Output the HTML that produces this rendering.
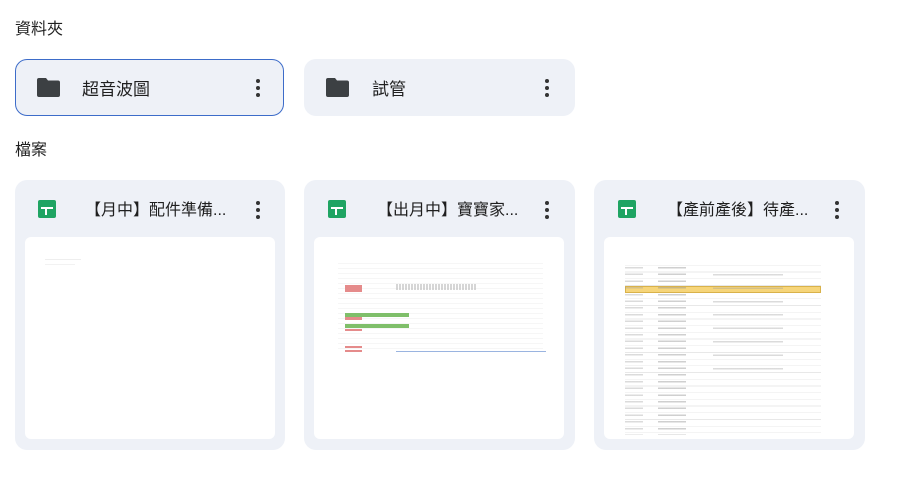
<!DOCTYPE html>
<html><head><meta charset="utf-8"><style>
*{margin:0;padding:0;box-sizing:border-box}
body{width:900px;height:477px;background:#fff;font-family:"Liberation Sans","Noto Sans CJK TC",sans-serif;color:#1f1f1f;position:relative;overflow:hidden}
.h{position:absolute;left:15px;font-size:16px}
.card{position:absolute;background:#eef1f7;border-radius:12px}
.fold{height:57px;top:59px}
.sel{border:1.5px solid #3d6cc9}
.t{position:absolute;font-size:16px;white-space:nowrap}
.fold .t{font-size:17px}
.dots{position:absolute;width:4px}
.dots i{display:block;width:4px;height:4px;border-radius:50%;background:#333;margin-bottom:3px}
.prev{position:absolute;left:10px;top:57px;width:250px;height:202px;background:#fff;border-radius:6px;overflow:hidden}
.sh{position:absolute;width:18px;height:18px;background:#1fa463;border-radius:2px}
.sh:before{content:"";position:absolute;left:3px;top:7px;width:12px;height:2px;background:#fff}
.sh:after{content:"";position:absolute;left:7px;top:7px;width:2px;height:8px;background:#fff}
.b{position:absolute}
</style></head><body>
<div class="h" style="top:15px">資料夾</div>
<div class="card fold sel" style="left:15px;width:269px">
 <svg style="position:absolute;left:21px;top:18px" width="23" height="19" viewBox="0 0 23 19"><path d="M2 0h7l2 2.5h10a2 2 0 0 1 2 2V17a2 2 0 0 1-2 2H2a2 2 0 0 1-2-2V2a2 2 0 0 1 2-2z" fill="#3c4043"/></svg>
 <div class="t" style="left:66px;top:15px">超音波圖</div>
 <div class="dots" style="left:240px;top:19px"><i></i><i></i><i></i></div>
</div>
<div class="card fold" style="left:304px;width:271px">
 <svg style="position:absolute;left:22px;top:19px" width="23" height="19" viewBox="0 0 23 19"><path d="M2 0h7l2 2.5h10a2 2 0 0 1 2 2V17a2 2 0 0 1-2 2H2a2 2 0 0 1-2-2V2a2 2 0 0 1 2-2z" fill="#3c4043"/></svg>
 <div class="t" style="left:68px;top:16px">試管</div>
 <div class="dots" style="left:241px;top:20px"><i></i><i></i><i></i></div>
</div>
<div class="h" style="top:136px">檔案</div>

<div class="card" style="left:15px;top:180px;width:270px;height:270px">
 <div class="sh" style="left:23px;top:20px"></div>
 <div class="t" style="left:70px;top:16px">【月中】配件準備...</div>
 <div class="dots" style="left:241px;top:21px"><i></i><i></i><i></i></div>
 <div class="prev"><div class="b" style="left:20px;top:22px;width:36px;height:1px;background:#eee"></div><div class="b" style="left:20px;top:27px;width:30px;height:1px;background:#f2f2f2"></div></div>
</div>

<div class="card" style="left:304px;top:180px;width:271px;height:270px">
 <div class="sh" style="left:24px;top:20px"></div>
 <div class="t" style="left:73px;top:16px">【出月中】寶寶家...</div>
 <div class="dots" style="left:241px;top:21px"><i></i><i></i><i></i></div>
 <div class="prev">
  <div class="b" style="left:24px;top:22px;width:205px;height:94px;background:repeating-linear-gradient(#fff 0 4px,#f6f6f6 4px 5px)"></div>
  <div class="b" style="left:31px;top:48px;width:17px;height:7px;background:#e58b8b"></div>
  <div class="b" style="left:82px;top:47px;width:80px;height:6px;background:repeating-linear-gradient(90deg,#bbb 0 2px,#fff 2px 3px);opacity:.6"></div>
  <div class="b" style="left:31px;top:76px;width:64px;height:4px;background:#7fbf6a"></div>
  <div class="b" style="left:31px;top:80px;width:17px;height:3px;background:#e58b8b"></div>
  <div class="b" style="left:31px;top:87px;width:64px;height:4px;background:#7fbf6a"></div>
  <div class="b" style="left:31px;top:92px;width:17px;height:2px;background:#e58b8b"></div>
  <div class="b" style="left:31px;top:109px;width:17px;height:2px;background:#e58b8b"></div>
  <div class="b" style="left:31px;top:113px;width:17px;height:2px;background:#e58b8b"></div>
  <div class="b" style="left:82px;top:114px;width:150px;height:1px;background:#9ab4e0"></div>
 </div>
</div>

<div class="card" style="left:594px;top:180px;width:271px;height:270px">
 <div class="sh" style="left:24px;top:20px"></div>
 <div class="t" style="left:73px;top:16px">【產前產後】待產...</div>
 <div class="dots" style="left:241px;top:21px"><i></i><i></i><i></i></div>
 <div class="prev">
  <div class="b" style="left:21px;top:22px;width:196px;height:180px;background:repeating-linear-gradient(#fff 0 6px,#e8e8e8 6px 6.7px)"></div>
  <div class="b" style="left:21px;top:49px;width:196px;height:7px;background:#f6d57a;border:1px solid #d9b24a"></div>
  <div class="b" style="left:21px;top:28px;width:18px;height:170px;background:repeating-linear-gradient(transparent 0 2px,#999 2px 3.5px,transparent 3.5px 6.7px);opacity:.35"></div>
  <div class="b" style="left:54px;top:28px;width:28px;height:170px;background:repeating-linear-gradient(transparent 0 2px,#888 2px 3.5px,transparent 3.5px 6.7px);opacity:.4"></div>
  <div class="b" style="left:109px;top:35px;width:70px;height:100px;background:repeating-linear-gradient(transparent 0 2px,#999 2px 3.5px,transparent 3.5px 13.4px);opacity:.35"></div>
 </div>
</div>
</body></html>
